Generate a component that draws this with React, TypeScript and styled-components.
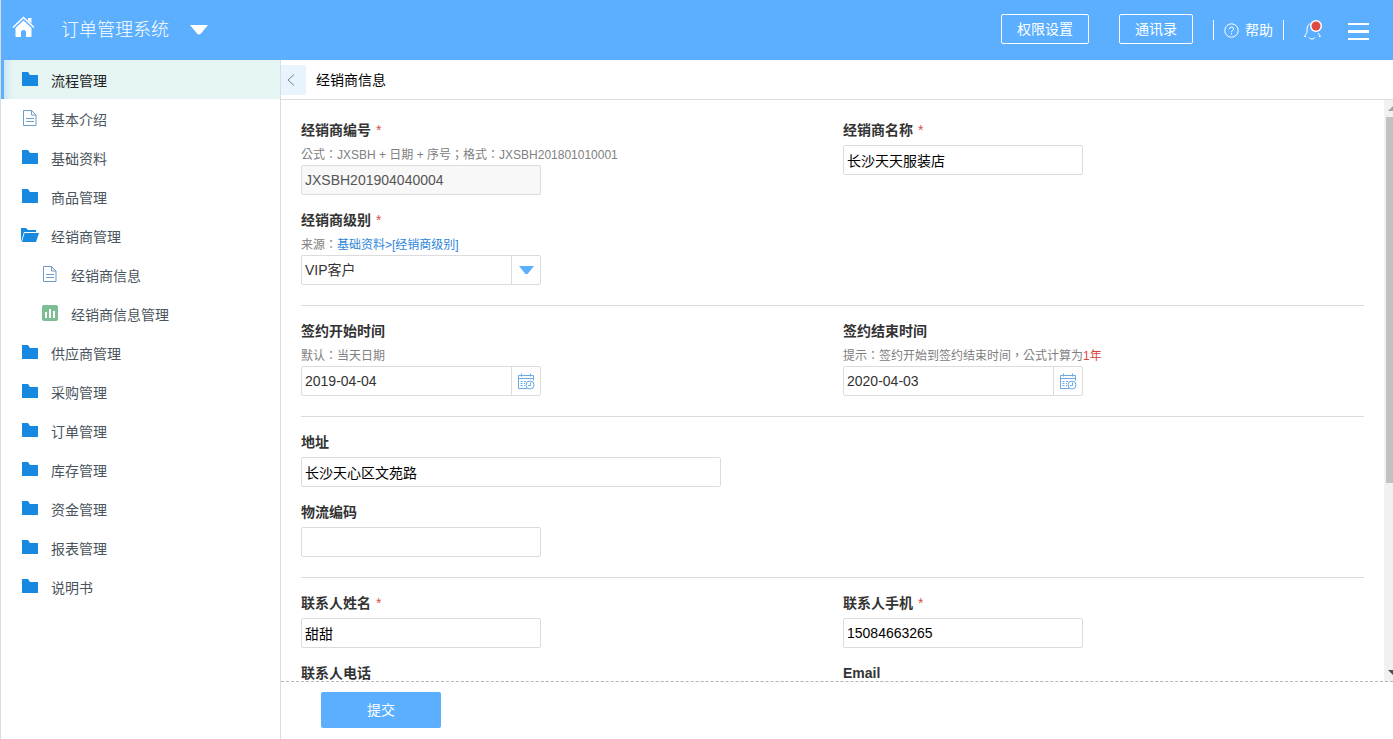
import React from "react";
import styled, { createGlobalStyle, css } from "styled-components";

const BLUE = "#5cafff";
const FOLDER = "#1789e0";
const LINE = "#dcdcdc";

const GlobalStyle = createGlobalStyle`
  * { box-sizing: border-box; }
  body {
    margin: 0;
    background: #fff;
    color: #333;
    font: 14px/20px "Liberation Sans", "Noto Sans CJK SC", sans-serif;
  }
  button, input, select { font: inherit; color: inherit; margin: 0; }
  button { cursor: pointer; }
  svg { display: block; flex: none; }
`;

const Page = styled.div`
  display: flex;
  flex-direction: column;
  height: 100vh;
  border-left: 1px solid #d8dde2;
`;

const Header = styled.header`
  flex: none;
  display: flex;
  align-items: center;
  justify-content: space-between;
  height: 60px;
  padding: 0 24px 0 11px;
  background: ${BLUE};
  color: #fff;
`;

const HeaderGroup = styled.div`
  display: flex;
  align-items: center;
`;

const SystemName = styled.h1`
  margin: 0 21px 0 25px;
  font-size: 18px;
  line-height: 28px;
  font-weight: 300;
`;

const IconButton = styled.button`
  display: flex;
  align-items: center;
  justify-content: center;
  padding: 0;
  border: 0;
  background: none;
`;

const OutlineButton = styled.button`
  height: 30px;
  margin: 0 30px 2px 0;
  padding: 0 15px;
  border: 1px solid #fff;
  border-radius: 2px;
  background: none;
  &:last-of-type { margin-right: 20px; }
`;

const HelpLink = styled.a`
  display: flex;
  align-items: center;
  gap: 6px;
  height: 20px;
  margin-right: 19px;
  padding: 0 10px;
  border: solid #fff;
  border-width: 0 1px;
  color: #fff;
  text-decoration: none;
`;

const MenuGroup = styled(HeaderGroup)`
  gap: 26px;
`;

const Body = styled.div`
  flex: 1;
  display: flex;
  min-height: 0;
`;

const Sidebar = styled.nav`
  flex: none;
  width: 280px;
  border-right: 1px solid ${LINE};
  overflow: hidden;
`;

const NavItem = styled.a<{ $active?: boolean; $nested?: boolean }>`
  display: flex;
  align-items: center;
  gap: 11px;
  height: 39px;
  padding: 2px 0 0 ${(p) => (p.$nested ? 39 : 19)}px;
  color: #4a545c;
  text-decoration: none;
  svg { margin-bottom: 4px; }
  ${(p) =>
    p.$active &&
    css`
      color: #222;
      background: linear-gradient(90deg, ${BLUE} 3px, #cfe6f3 3px, #e5f5f4 12px);
    `}
`;

const Main = styled.main`
  flex: 1;
  display: flex;
  flex-direction: column;
  min-width: 0;
`;

const TitleBar = styled.div`
  flex: none;
  display: flex;
  align-items: center;
  gap: 10px;
  height: 40px;
  border-bottom: 1px solid ${LINE};
`;

const BackButton = styled(IconButton)`
  width: 25px;
  height: 30px;
  padding-right: 5px;
  border-radius: 0 2px 2px 0;
  background: #e9f3fe;
  color: #66829c;
`;

const PageTitle = styled.h2`
  margin: 0;
  font-size: 14px;
  font-weight: 400;
  color: #000;
`;

const ScrollArea = styled.div`
  flex: 1;
  display: flex;
  min-height: 0;
`;

const Form = styled.form`
  flex: 1;
  min-width: 0;
  padding: 5px 20px 0;
  overflow-y: auto;
  scrollbar-width: none;
`;

const Section = styled.section`
  display: grid;
  grid-template-columns: 1fr 1fr;
  gap: 15px 21px;
  align-items: start;
  padding: 15px 0 20px;
  & + & { border-top: 1px solid ${LINE}; }
`;

const Field = styled.div<{ $wide?: boolean }>`
  display: flex;
  flex-direction: column;
  align-items: flex-start;
  ${(p) => p.$wide && "grid-column: 1 / -1;"}
`;

const Label = styled.label`
  margin-bottom: 5px;
  font-weight: 700;
`;

const Star = styled.span`
  margin-left: 5px;
  color: #d9534f;
  font-weight: 400;
`;

const Hint = styled.div`
  font: 12px/20px "Liberation Sans", "Noto Sans CJK TC", sans-serif;
  color: #808080;
  white-space: nowrap;
  a { color: #2c86d8; text-decoration: none; }
  em { color: #d9433f; font-style: normal; }
`;

const box = css`
  height: 30px;
  border: 1px solid ${LINE};
  border-radius: 2px;
  background: #fff;
`;

const TextInput = styled.input<{ $long?: boolean }>`
  ${box}
  width: ${(p) => (p.$long ? 420 : 240)}px;
  padding: 0 3px;
  color: #000;
  &:read-only { background: #f8f8f8; color: #555; }
`;

const Combo = styled.div`
  ${box}
  display: flex;
  width: 240px;
  input, select {
    flex: 1;
    min-width: 0;
    padding: 0 3px;
    border: 0;
    background: none;
    appearance: none;
  }
`;

const ComboButton = styled(IconButton)`
  width: 29px;
  padding-left: 1px;
  border-left: 1px solid ${LINE};
`;

const Scrollbar = styled.div`
  flex: none;
  display: grid;
  grid-template-rows: 17px 1fr 17px;
  width: 9px;
  background: #f1f1f1;
  overflow: hidden;
`;

const ScrollArrow = styled.div`
  display: flex;
  align-items: center;
  justify-content: flex-end;
`;

const Thumb = styled.div`
  height: 67%;
  margin-left: 2px;
  background: #c1c1c1;
`;

const Footer = styled.footer`
  flex: none;
  padding: 10px 40px 11px;
  border-top: 1px dashed #b4b4b4;
`;

const SubmitButton = styled.button`
  display: block;
  width: 120px;
  height: 36px;
  border: 0;
  border-radius: 2px;
  background: ${BLUE};
  color: #fff;
`;

type IconName = "folder" | "open" | "doc" | "chart";

function NavIcon({ name }: { name: IconName }) {
  return (
    <svg width="20" height="18" viewBox="0 0 20 18" aria-hidden="true">
      {name === "folder" && <path d="M2 2h6l2 3h8v11H2z" fill={FOLDER} />}
      {name === "open" && (
        <>
          <path d="M1 16V2h5l2 2h8v2H4z" fill={FOLDER} />
          <path d="M4.5 7H19l-3 9H2z" fill={FOLDER} />
        </>
      )}
      {name === "doc" && (
        <g fill="none" stroke="#6f9dc8">
          <path d="M3.500 1.500h8l4.500 4.500v10.500h-12.500z" />
          <path d="M11.500 1.500v4.500h4.500M6 9.500h8M6 12.500h8" />
        </g>
      )}
      {name === "chart" && (
        <>
          <rect x="2" y="1" width="16" height="16" rx="2" fill="#7dbd94" />
          <path d="M5 8h2v6H5zM9 5h2v9H9zM13 7h2v7h-2z" fill="#fff" />
        </>
      )}
    </svg>
  );
}

function CalendarIcon() {
  return (
    <svg width="17" height="17" viewBox="0 0 17 17" fill="none" stroke="#6ba9e8" aria-hidden="true">
      <path d="M9 15.500H.5v-13h15v5M.5 5.500h15M3.500 .5v3M12.500 .5v3" />
      <path d="M2.500 8.500h2M6 8.500h2M2.500 10.500h2M6 10.500h1M2.500 12.500h2M6 12.500h1" />
      <circle cx="12" cy="12" r="4" />
      <path d="M12.500 9.500v3h-2.500" />
    </svg>
  );
}

const NAV: { text: string; icon: IconName; active?: boolean; nested?: boolean }[] = [
  { text: "流程管理", icon: "folder", active: true },
  { text: "基本介绍", icon: "doc" },
  { text: "基础资料", icon: "folder" },
  { text: "商品管理", icon: "folder" },
  { text: "经销商管理", icon: "open" },
  { text: "经销商信息", icon: "doc", nested: true },
  { text: "经销商信息管理", icon: "chart", nested: true },
  { text: "供应商管理", icon: "folder" },
  { text: "采购管理", icon: "folder" },
  { text: "订单管理", icon: "folder" },
  { text: "库存管理", icon: "folder" },
  { text: "资金管理", icon: "folder" },
  { text: "报表管理", icon: "folder" },
  { text: "说明书", icon: "folder" },
];

interface FormFieldProps {
  id: string;
  label: string;
  required?: boolean;
  wide?: boolean;
  hint?: React.ReactNode;
  children: React.ReactNode;
}

function FormField({ id, label, required, wide, hint, children }: FormFieldProps) {
  return (
    <Field $wide={wide}>
      <Label htmlFor={id}>
        {label}
        {required && <Star>*</Star>}
      </Label>
      {hint && <Hint>{hint}</Hint>}
      {children}
    </Field>
  );
}

function DateInput({ id, value }: { id: string; value: string }) {
  return (
    <Combo>
      <input id={id} defaultValue={value} />
      <ComboButton type="button" aria-label="选择日期">
        <CalendarIcon />
      </ComboButton>
    </Combo>
  );
}

export default function App() {
  return (
    <Page>
      <GlobalStyle />
      <Header>
        <HeaderGroup>
          <IconButton aria-label="首页">
            <svg width="24" height="30" viewBox="0 0 24 30">
              <path d="M1 12.500 11.500 2.500 22 12.500" fill="none" stroke="#fff" strokeWidth="1.6" />
              <path d="M16 3h3.500v5.500L16 5.500z" fill="#fff" />
              <path d="M11.500 5.500 19.500 13v8q0 1-1 1H14v-5q0-2-2.500-2T9 17v5H4.500q-1 0-1-1v-8z" fill="#fff" />
            </svg>
          </IconButton>
          <SystemName>订单管理系统</SystemName>
          <IconButton aria-label="切换系统">
            <svg width="18" height="10" viewBox="0 0 18 10">
              <path d="M0 0h18l-7 8.500q-2 2-4 0z" fill="#fff" />
            </svg>
          </IconButton>
        </HeaderGroup>
        <HeaderGroup>
          <OutlineButton>权限设置</OutlineButton>
          <OutlineButton>通讯录</OutlineButton>
          <HelpLink href="#help">
            <svg width="15" height="15" viewBox="0 0 15 15" fill="none" stroke="#fff">
              <circle cx="7.500" cy="7.500" r="6.700" />
              <path d="M5.500 6q0-2 2-2t2 2q0 1-1 1.500t-1 1.800M7.500 10.300v1.200" />
            </svg>
            帮助
          </HelpLink>
          <MenuGroup>
            <IconButton aria-label="消息">
              <svg width="19" height="20" viewBox="0 0 19 20" fill="none" stroke="#fff">
                <path d="M7 3.500Q4 5 4 9v3.500L1.500 16.500H3M15 13l2.500 3.500H16" />
                <path d="M6 17.500q.5 1.500 3 1.500t3-1.500" />
                <circle cx="13" cy="6" r="6" fill="#fff" stroke="none" />
                <circle cx="13" cy="6" r="4.500" fill="#e04a43" stroke="none" />
              </svg>
            </IconButton>
            <IconButton aria-label="菜单">
              <svg width="21" height="20" viewBox="0 0 21 20">
                <path d="M0 3h21v2H0zM0 10h21v3H0zM0 18h21v2H0z" fill="#fff" />
              </svg>
            </IconButton>
          </MenuGroup>
        </HeaderGroup>
      </Header>

      <Body>
        <Sidebar>
          {NAV.map((n) => (
            <NavItem key={n.text} href="#" $active={n.active} $nested={n.nested}>
              <NavIcon name={n.icon} />
              {n.text}
            </NavItem>
          ))}
        </Sidebar>

        <Main>
          <TitleBar>
            <BackButton aria-label="返回">
              <svg width="8" height="12" viewBox="0 0 8 12" fill="none" stroke="currentColor">
                <path d="M7 .5 1 6l6 5.500" />
              </svg>
            </BackButton>
            <PageTitle>经销商信息</PageTitle>
          </TitleBar>

          <ScrollArea>
            <Form id="dealer">
              <Section>
                <FormField
                  id="code"
                  label="经销商编号"
                  required
                  hint="公式：JXSBH + 日期 + 序号；格式：JXSBH201801010001"
                >
                  <TextInput id="code" readOnly value="JXSBH201904040004" />
                </FormField>
                <FormField id="name" label="经销商名称" required>
                  <TextInput id="name" defaultValue="长沙天天服装店" />
                </FormField>
                <FormField
                  id="level"
                  label="经销商级别"
                  required
                  hint={<>来源：<a href="#level">基础资料&gt;[经销商级别]</a></>}
                >
                  <Combo>
                    <select id="level">
                      <option>VIP客户</option>
                    </select>
                    <ComboButton type="button" aria-label="展开">
                      <svg width="15" height="9" viewBox="0 0 15 9">
                        <path d="M0 0h15L9 7.500q-1.500 1.500-3 0z" fill={BLUE} />
                      </svg>
                    </ComboButton>
                  </Combo>
                </FormField>
              </Section>

              <Section>
                <FormField id="start" label="签约开始时间" hint="默认：当天日期">
                  <DateInput id="start" value="2019-04-04" />
                </FormField>
                <FormField
                  id="end"
                  label="签约结束时间"
                  hint={<>提示：签约开始到签约结束时间，公式计算为<em>1年</em></>}
                >
                  <DateInput id="end" value="2020-04-03" />
                </FormField>
              </Section>

              <Section>
                <FormField id="address" label="地址" wide>
                  <TextInput id="address" $long defaultValue="长沙天心区文苑路" />
                </FormField>
                <FormField id="logistics" label="物流编码" wide>
                  <TextInput id="logistics" />
                </FormField>
              </Section>

              <Section>
                <FormField id="contact" label="联系人姓名" required>
                  <TextInput id="contact" defaultValue="甜甜" />
                </FormField>
                <FormField id="mobile" label="联系人手机" required>
                  <TextInput id="mobile" defaultValue="15084663265" />
                </FormField>
                <FormField id="phone" label="联系人电话">
                  <TextInput id="phone" />
                </FormField>
                <FormField id="email" label="Email">
                  <TextInput id="email" type="email" />
                </FormField>
              </Section>
            </Form>
            <Scrollbar aria-hidden="true">
              <ScrollArrow>
                <svg width="5" height="5" viewBox="0 0 5 5"><path d="M0 5 5 0v5z" fill="#a3a3a3" /></svg>
              </ScrollArrow>
              <Thumb />
              <ScrollArrow>
                <svg width="5" height="5" viewBox="0 0 5 5"><path d="M0 0h5v5z" fill="#505050" /></svg>
              </ScrollArrow>
            </Scrollbar>
          </ScrollArea>

          <Footer>
            <SubmitButton type="submit" form="dealer">提交</SubmitButton>
          </Footer>
        </Main>
      </Body>
    </Page>
  );
}
